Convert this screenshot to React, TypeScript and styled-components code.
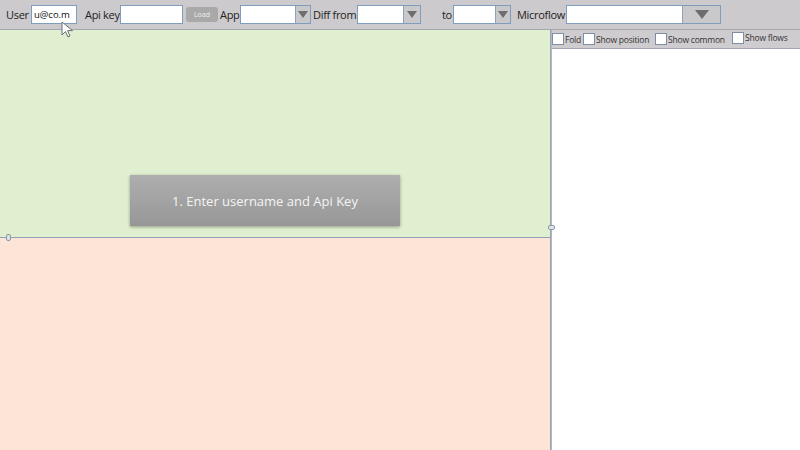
import React from 'react';
import styled, { createGlobalStyle } from 'styled-components';

const GlobalStyle = createGlobalStyle`
  html, body {
    margin: 0;
    padding: 0;
    background: #ffffff;
  }
  body {
    font-family: 'Open Sans', 'Noto Sans', sans-serif;
  }
`;

const Page = styled.div`
  position: relative;
  width: 800px;
  height: 450px;
  display: flex;
  flex-direction: column;
  overflow: hidden;
`;

const Toolbar = styled.div`
  height: 29px;
  flex: none;
  display: flex;
  align-items: center;
  padding-left: 6px;
  background: #cdcacd;
  border-bottom: 1px solid #a6a7ae;
`;

const Label = styled.span<{ $ml?: number; $w: number }>`
  flex: none;
  width: ${(p) => p.$w}px;
  font-size: 11px;
  color: #222;
  margin-left: ${(p) => p.$ml ?? 0}px;
  white-space: nowrap;
  letter-spacing: -0.3px;
`;

const TextInput = styled.div<{ $w: number }>`
  flex: none;
  width: ${(p) => p.$w}px;
  height: 19px;
  box-sizing: border-box;
  background: #fff;
  border: 1px solid #7f9dbf;
  font-size: 9.5px;
  line-height: 17px;
  padding-left: 2px;
  color: #111;
`;

const LoadButton = styled.div`
  flex: none;
  width: 32px;
  height: 15px;
  margin: 0 2px 0 3px;
  border-radius: 3px;
  background: #a9a9a9;
  color: #f0f0f0;
  font-size: 7px;
  display: flex;
  align-items: center;
  justify-content: center;
`;

const Select = styled.div<{ $w: number }>`
  flex: none;
  width: ${(p) => p.$w}px;
  height: 19px;
  display: flex;
  box-sizing: border-box;
  border: 1px solid #7f9dbf;
  background: #fff;
`;

const SelectField = styled.div`
  flex: 1;
`;

const SelectArrow = styled.div<{ $w: number }>`
  width: ${(p) => p.$w}px;
  background: #c9c9cb;
  border-left: 1px solid #8fa2b8;
  display: flex;
  align-items: center;
  justify-content: center;
`;

const Triangle = styled.div<{ $s: number }>`
  width: 0;
  height: 0;
  border-left: ${(p) => p.$s}px solid transparent;
  border-right: ${(p) => p.$s}px solid transparent;
  border-top: ${(p) => p.$s * 1.4}px solid #6d6d6f;
`;

const Main = styled.div`
  flex: 1;
  display: flex;
`;

const LeftPane = styled.div`
  position: relative;
  flex: none;
  width: 550px;
  display: flex;
  flex-direction: column;
`;

const DiffPane = styled.div`
  height: 207px;
  background: #e0efcf;
  display: flex;
  align-items: flex-end;
  justify-content: center;
  padding: 0 20px 11px 0;
  box-sizing: border-box;
`;

const HSplitter = styled.div`
  height: 1px;
  background: #8fa3b6;
`;

const ResultPane = styled.div`
  flex: 1;
  background: #fce4d6;
`;

const Handle = styled.div<{ $x: number; $y: number; $v?: boolean }>`
  position: absolute;
  left: ${(p) => p.$x}px;
  top: ${(p) => p.$y}px;
  width: ${(p) => (p.$v ? 5 : 3)}px;
  height: ${(p) => (p.$v ? 3 : 5)}px;
  border: 1px solid #8a98a6;
  border-radius: 2px;
  background: #dfe4e8;
`;

const PromptButton = styled.div`
  width: 270px;
  height: 51px;
  background: linear-gradient(#aeaeae, #979797);
  box-shadow: 0 1px 3px rgba(0, 0, 0, 0.35);
  color: #f4f4f4;
  font-size: 13px;
  display: flex;
  align-items: center;
  justify-content: center;
`;

const VSplitter = styled.div`
  flex: none;
  width: 1px;
  background: #b4b6bd;
  border-left: 1px solid #9aa6b3;
`;

const RightPane = styled.div`
  flex: 1;
  display: flex;
  flex-direction: column;
  background: #fff;
`;

const OptionsBar = styled.div`
  height: 18px;
  display: flex;
  align-items: center;
  background: #cfcccf;
  border-bottom: 1px solid #a4a8b0;
`;

const Check = styled.div<{ $up?: boolean }>`
  flex: none;
  box-sizing: border-box;
  width: 12px;
  height: 12px;
  background: #fff;
  border: 1px solid #7f8fa3;
  margin-top: ${(p) => (p.$up ? -3 : 0)}px;
`;

const CheckLabel = styled.span<{ $up?: boolean; $w: number }>`
  flex: none;
  width: ${(p) => p.$w}px;
  font-size: 8.5px;
  letter-spacing: -0.2px;
  color: #333;
  padding-left: 1px;
  box-sizing: border-box;
  margin-top: ${(p) => (p.$up ? -3 : 0)}px;
  white-space: nowrap;
`;

const Cursor = styled.svg`
  position: absolute;
  left: 61px;
  top: 21px;
`;

export default function App() {
  return (
    <Page>
      <GlobalStyle />
      <Toolbar>
        <Label $w={25}>User</Label>
        <TextInput $w={46}>u@co.m</TextInput>
        <Label $ml={8} $w={35}>Api key</Label>
        <TextInput $w={63} />
        <LoadButton>Load</LoadButton>
        <Label $w={20}>App</Label>
        <Select $w={71}>
          <SelectField />
          <SelectArrow $w={14}>
            <Triangle $s={5} />
          </SelectArrow>
        </Select>
        <Label $ml={2} $w={44}>Diff from</Label>
        <Select $w={64}>
          <SelectField />
          <SelectArrow $w={16}>
            <Triangle $s={5} />
          </SelectArrow>
        </Select>
        <Label $ml={21} $w={11}>to</Label>
        <Select $w={58}>
          <SelectField />
          <SelectArrow $w={14}>
            <Triangle $s={5} />
          </SelectArrow>
        </Select>
        <Label $ml={6} $w={49}>Microflow</Label>
        <Select $w={155}>
          <SelectField />
          <SelectArrow $w={37}>
            <Triangle $s={7} />
          </SelectArrow>
        </Select>
      </Toolbar>
      <Main>
        <LeftPane>
          <DiffPane>
            <PromptButton>1. Enter username and Api Key</PromptButton>
          </DiffPane>
          <HSplitter />
          <ResultPane />
          <Handle $x={6} $y={204} />
          <Handle $x={548} $y={195} $v />
        </LeftPane>
        <VSplitter />
        <RightPane>
          <OptionsBar>
            <Check />
            <CheckLabel $w={19}>Fold</CheckLabel>
            <Check />
            <CheckLabel $w={60}>Show position</CheckLabel>
            <Check />
            <CheckLabel $w={65}>Show common</CheckLabel>
            <Check $up />
            <CheckLabel $up $w={50}>Show flows</CheckLabel>
          </OptionsBar>
        </RightPane>
      </Main>
      <Cursor width="14" height="18" viewBox="0 0 14 18">
        <path d="M1 1 L1 14 L4.5 10.5 L7 16 L9 15 L6.6 9.6 L11.5 9.6 Z" fill="#fff" stroke="#6b7078" strokeWidth="1" />
      </Cursor>
    </Page>
  );
}
